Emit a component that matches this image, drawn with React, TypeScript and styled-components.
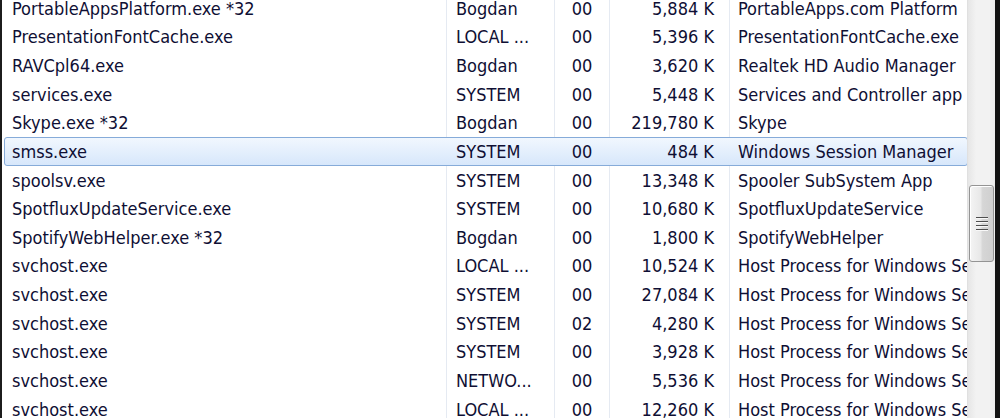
import React from "react";
import styled, { createGlobalStyle } from "styled-components";

const Global = createGlobalStyle`
  html, body { margin: 0; padding: 0; background: #fff; overflow: hidden; }
  #root { height: 418px; }
`;

type Proc = { name: string; user: string; cpu: string; mem: string; desc: string; selected?: boolean };

const procs: Proc[] = [
  { name: "PortableAppsPlatform.exe *32", user: "Bogdan", cpu: "00", mem: "5,884 K", desc: "PortableApps.com Platform" },
  { name: "PresentationFontCache.exe", user: "LOCAL ...", cpu: "00", mem: "5,396 K", desc: "PresentationFontCache.exe" },
  { name: "RAVCpl64.exe", user: "Bogdan", cpu: "00", mem: "3,620 K", desc: "Realtek HD Audio Manager" },
  { name: "services.exe", user: "SYSTEM", cpu: "00", mem: "5,448 K", desc: "Services and Controller app" },
  { name: "Skype.exe *32", user: "Bogdan", cpu: "00", mem: "219,780 K", desc: "Skype" },
  { name: "smss.exe", user: "SYSTEM", cpu: "00", mem: "484 K", desc: "Windows Session Manager", selected: true },
  { name: "spoolsv.exe", user: "SYSTEM", cpu: "00", mem: "13,348 K", desc: "Spooler SubSystem App" },
  { name: "SpotfluxUpdateService.exe", user: "SYSTEM", cpu: "00", mem: "10,680 K", desc: "SpotfluxUpdateService" },
  { name: "SpotifyWebHelper.exe *32", user: "Bogdan", cpu: "00", mem: "1,800 K", desc: "SpotifyWebHelper" },
  { name: "svchost.exe", user: "LOCAL ...", cpu: "00", mem: "10,524 K", desc: "Host Process for Windows Services" },
  { name: "svchost.exe", user: "SYSTEM", cpu: "00", mem: "27,084 K", desc: "Host Process for Windows Services" },
  { name: "svchost.exe", user: "SYSTEM", cpu: "02", mem: "4,280 K", desc: "Host Process for Windows Services" },
  { name: "svchost.exe", user: "SYSTEM", cpu: "00", mem: "3,928 K", desc: "Host Process for Windows Services" },
  { name: "svchost.exe", user: "NETWO...", cpu: "00", mem: "5,536 K", desc: "Host Process for Windows Services" },
  { name: "svchost.exe", user: "LOCAL ...", cpu: "00", mem: "12,260 K", desc: "Host Process for Windows Services" },
];

const Window = styled.div`
  display: flex;
  height: 418px;
  border-left: 2px solid #1c1c1c;
  border-right: 5px solid #121212;
  box-sizing: border-box;
  overflow: hidden;
  background: #fff;
`;

const List = styled.div`
  flex: 1;
  min-width: 0;
  padding-left: 2px;
  overflow: hidden;
  font-family: "DejaVu Sans Condensed", "Liberation Sans", sans-serif;
  font-size: 18px;
  color: #0f0f34;
`;

const Rows = styled.div`
  margin-top: -6px;
  display: flex;
  flex-direction: column;
`;

const Row = styled.div<{ $selected?: boolean }>`
  display: grid;
  grid-template-columns: 441px 108px 55px 120px 1fr;
  height: 28.64px;
  box-sizing: border-box;
  align-items: stretch;
  border: 1px solid ${(p) => (p.$selected ? "#86abd9" : "transparent")};
  border-radius: 3px;
  background: ${(p) => (p.$selected ? "linear-gradient(#f1f7fe, #d7e7fb)" : "transparent")};
  margin-right: -1px;
`;

const Cell = styled.div<{ $align?: "left" | "right" | "center"; $pl?: number; $pr?: number; $sep?: boolean; $selected?: boolean }>`
  display: flex;
  align-items: center;
  justify-content: ${(p) => (p.$align === "right" ? "flex-end" : p.$align === "center" ? "center" : "flex-start")};
  padding-left: ${(p) => p.$pl ?? 0}px;
  padding-right: ${(p) => p.$pr ?? 0}px;
  border-left: ${(p) => (p.$sep ? `1px solid ${p.$selected ? "transparent" : "#e5eaf2"}` : "none")};
  white-space: nowrap;
  overflow: hidden;
  min-width: 0;
  margin-top: -1px;
  margin-bottom: -1px;
`;

const Scrollbar = styled.div`
  width: 28px;
  flex: none;
  position: relative;
  background: linear-gradient(90deg, #e6e6e6, #f2f2f2 30%, #f2f2f2 80%, #ececec);
  border-left: 1px solid #e0e0e0;
  box-sizing: border-box;
`;

const Thumb = styled.div`
  position: absolute;
  left: 1px;
  right: 1px;
  top: 185px;
  height: 77px;
  box-sizing: border-box;
  border: 1px solid #949494;
  border-radius: 3px;
  background: linear-gradient(90deg, #f4f4f4, #e8e8e8 45%, #d6d6d6 55%, #cfcfcf);
  box-shadow: inset 1px 1px 0 #ffffff;
  display: flex;
  align-items: center;
  justify-content: center;
`;

const Grip = styled.div`
  width: 12px;
  display: flex;
  flex-direction: column;
  gap: 2px;
`;

const GripLine = styled.div`
  background: #4e4e4e;
  border-bottom: 1px solid #f8f8f8;
  box-sizing: content-box;
  height: 1px;
`;

export default function App() {
  return (
    <>
      <Global />
      <Window>
        <List>
          <Rows>
            {procs.map((p, i) => (
              <Row key={i} $selected={p.selected}>
                <Cell $pl={7}>{p.name}</Cell>
                <Cell $sep $selected={p.selected} $pl={9}>{p.user}</Cell>
                <Cell $sep $selected={p.selected} $align="center">{p.cpu}</Cell>
                <Cell $sep $selected={p.selected} $align="right" $pr={15}>{p.mem}</Cell>
                <Cell $sep $selected={p.selected} $pl={8}>{p.desc}</Cell>
              </Row>
            ))}
          </Rows>
        </List>
        <Scrollbar>
          <Thumb>
            <Grip>
              <GripLine />
              <GripLine />
              <GripLine />
              <GripLine />
            </Grip>
          </Thumb>
        </Scrollbar>
      </Window>
    </>
  );
}
